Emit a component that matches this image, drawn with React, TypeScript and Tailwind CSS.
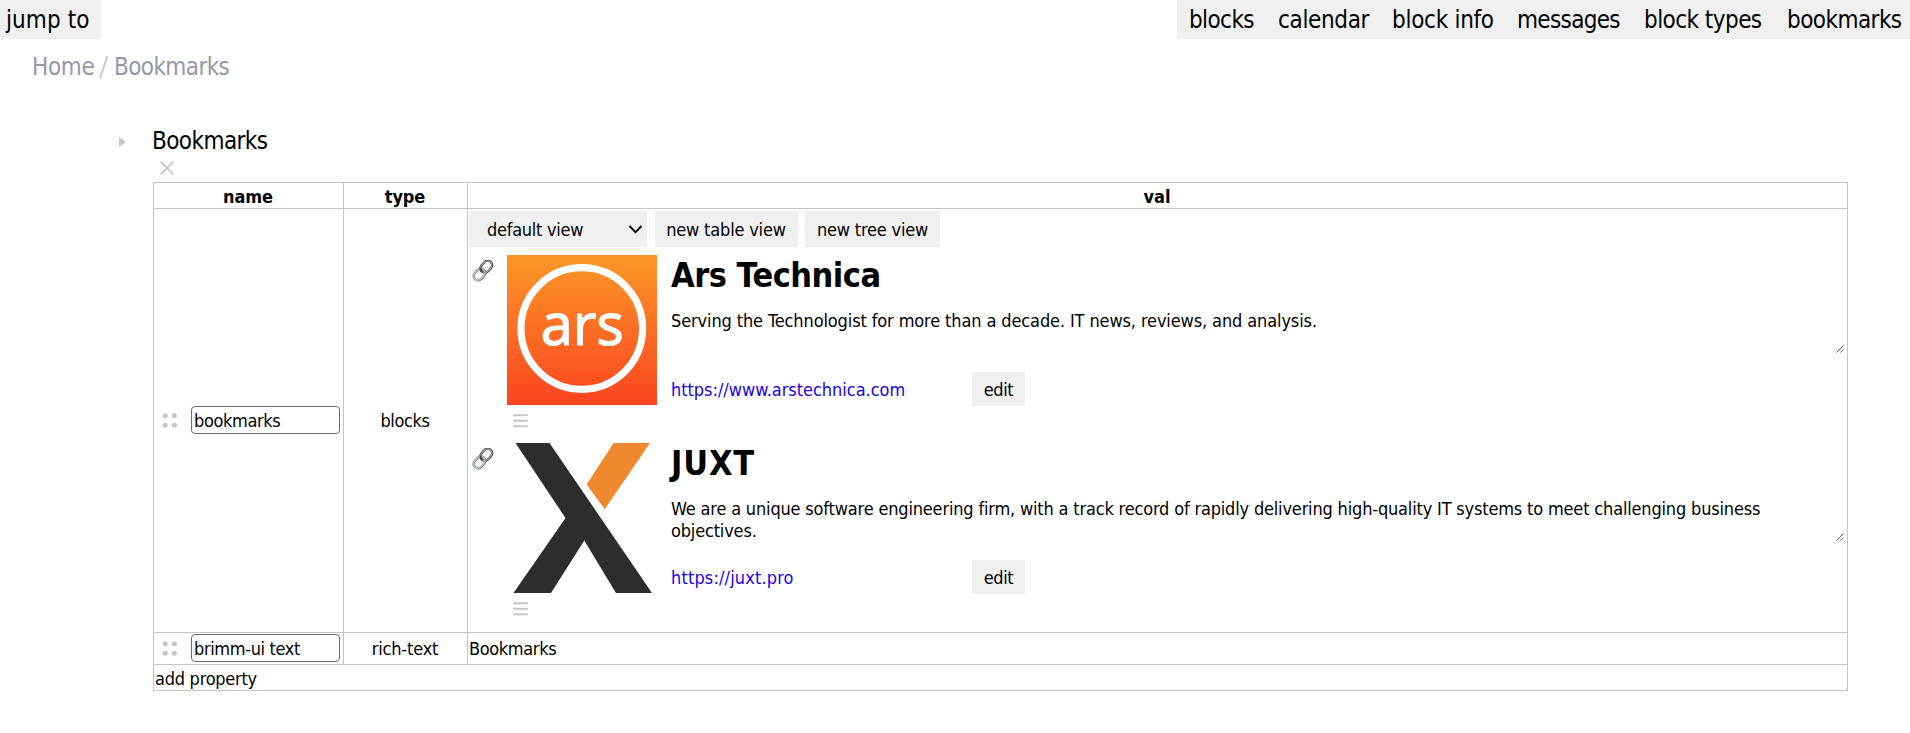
import React from "react";

const NAV = [
  { label: "blocks", width: "w-[65px] tracking-[-0.025em]" },
  { label: "calendar", width: "w-[90px]" },
  { label: "block info", width: "w-[101px] tracking-[-0.012em]" },
  { label: "messages", width: "w-[103px] tracking-[-0.028em]" },
  { label: "block types", width: "w-[119px] tracking-[-0.023em]" },
  { label: "bookmarks", width: "w-[117px] tracking-[-0.023em]" },
];

function LinkIcon() {
  return (
    <svg className="mt-[5px] ml-[3px] h-[22px] w-[22px] shrink-0" viewBox="0 0 22 22" fill="none">
      <g transform="rotate(-48 10.8 10.5)">
        <rect x="9.4" y="6.2" width="13" height="8.8" rx="4.4" stroke="#4a454b" strokeWidth="2.4" />
        <rect x="9.5" y="6.3" width="12.6" height="8.5" rx="4.25" stroke="#b3b5c2" strokeWidth="1" />
        <rect x="-0.8" y="6.2" width="13" height="8.8" rx="4.4" stroke="#6b7480" strokeWidth="2.4" />
        <rect x="-0.7" y="6.1" width="12.7" height="8.6" rx="4.3" stroke="#ccd6e2" strokeWidth="1.2" />
        <path d="M9.4 11a4.4 4.4 0 0 1 2 -4" stroke="#4a454b" strokeWidth="2.2" />
      </g>
    </svg>
  );
}

function ArsLogo() {
  return (
    <svg className="block h-[150px] w-[150px]" viewBox="0 0 150 150">
      <defs>
        <linearGradient id="ars-bg" x1="0" y1="0" x2="0" y2="1">
          <stop offset="0" stopColor="#fc9828" />
          <stop offset="1" stopColor="#fc4420" />
        </linearGradient>
      </defs>
      <rect width="150" height="150" fill="url(#ars-bg)" />
      <circle cx="74.8" cy="73.5" r="60.8" fill="none" stroke="#fff" strokeWidth="7.2" />
      <text
        x="75"
        y="89.5"
        textAnchor="middle"
        textLength="83"
        lengthAdjust="spacingAndGlyphs"
        fontSize="58"
        fontFamily="'Noto Sans', sans-serif"
        fill="#fff"
        stroke="#fff"
        strokeWidth="0.9"
      >
        ars
      </text>
    </svg>
  );
}

function JuxtLogo() {
  return (
    <svg className="block h-[150px] w-[150px]" viewBox="0 0 150 150">
      <path d="M8.5 0H42.5L145 150H109L77.3 97.5L44 150H6.5L58.5 75Z" fill="#2d2d2d" />
      <path d="M106.5 0H143L97.7 66.3L79.7 41.5Z" fill="#f0882d" />
    </svg>
  );
}

function Hamburger() {
  return (
    <svg className="mt-[9px] ml-[6px] block h-[14px] w-[15px]" viewBox="0 0 15 14">
      <path d="M1 1.2H14M1 6.7H14M1 12.3H14" stroke="#c6c6c6" strokeWidth="2" strokeLinecap="round" />
    </svg>
  );
}

function Resizer() {
  return (
    <svg className="h-[8px] w-[8px]" viewBox="0 0 8 8" fill="none">
      <path d="M0.5 7.5L7.5 0.5M4.5 7.5L7.5 4.5" stroke="#555" strokeWidth="0.9" />
    </svg>
  );
}

function Grip() {
  return (
    <svg className="h-[15px] w-[15px] shrink-0" viewBox="0 0 15 15" fill="#c6c6c6">
      <circle cx="3.2" cy="2.7" r="2.5" />
      <circle cx="12.4" cy="2.7" r="2.5" />
      <circle cx="3.2" cy="12.3" r="2.5" />
      <circle cx="12.4" cy="12.3" r="2.5" />
    </svg>
  );
}

function NameCell({ value }: { value: string }) {
  return (
    <div className="flex items-center pb-px pl-[8px]">
      <Grip />
      <div className="ml-[14px] flex h-[28px] w-[149px] items-center rounded-[4px] border border-[#6b6b6b] pt-[2px] pl-[2px]">
        {value}
      </div>
    </div>
  );
}

type BookmarkProps = {
  logo: React.ReactNode;
  title: React.ReactNode;
  text: React.ReactNode;
  url: React.ReactNode;
};

function Bookmark({ logo, title, text, url }: BookmarkProps) {
  return (
    <div className="flex h-[188px] items-start">
      <LinkIcon />
      <div className="ml-[13px] w-[150px] shrink-0">
        {logo}
        <Hamburger />
      </div>
      <div className="ml-[14px] flex h-[151px] min-w-0 flex-1 flex-col">
        <h2 className="h-[52px] text-[34px] leading-[41px] font-bold whitespace-nowrap">{title}</h2>
        <div className="flex h-[65px] items-start justify-between">
          <p className="pt-[3px] leading-[22px]">{text}</p>
          <div className="pt-[38px] pr-[3px]">
            <Resizer />
          </div>
        </div>
        <div className="flex h-[34px] items-center">
          <a className="w-[301px] pt-[2px] tracking-[-0.002em] text-[#2200ee]">{url}</a>
          <button className="h-[34px] w-[53px] bg-[#f0f0f0] pt-[2px]">edit</button>
        </div>
      </div>
    </div>
  );
}

export default function App() {
  return (
    <div className="h-[733px] w-[1910px] overflow-hidden bg-white font-['DejaVu_Sans_Condensed','DejaVu_Sans',sans-serif] text-[18px] leading-[22px] tracking-[-0.02em] text-black [font-stretch:condensed]">
      <header className="flex h-[39px] justify-between text-[24px] leading-[41px]">
        <button className="w-[101px] bg-[#f0f0f0] pl-[6px] text-left tracking-[0.003em] whitespace-nowrap">jump to</button>
        <nav className="flex gap-[24px] bg-[#f0f0f0] pr-[6px] pl-[12px] whitespace-nowrap">
          {NAV.map((n) => (
            <a key={n.label} className={n.width}>
              {n.label}
            </a>
          ))}
        </nav>
      </header>

      <div className="flex h-[55px] pt-[14px] pl-[32px] text-[24px] leading-[28px] whitespace-nowrap text-[#9399a8]">
        <span className="w-[66px]">Home</span>
        <svg className="mt-[3px] mr-[5px] h-[23px] w-[11px]" viewBox="0 0 11 23">
          <path d="M2 22.5L9.2 0.5" stroke="#c8c8c8" strokeWidth="2" />
        </svg>
        <span className="tracking-[-0.025em]">Bookmarks</span>
      </div>

      <div className="flex h-[67px] items-start pt-[33px] pl-[119px]">
        <svg className="mt-[10px] h-[10px] w-[7px]" viewBox="0 0 7 10">
          <path d="M0 0L7 5L0 10Z" fill="#c6c6c6" />
        </svg>
        <h1 className="ml-[26px] text-[24px] leading-[28px] tracking-[-0.024em]">Bookmarks</h1>
      </div>

      <div className="h-[21px] pl-[160px]">
        <svg className="h-[14px] w-[14px]" viewBox="0 0 14 14">
          <path d="M1.2 1.2L12.8 12.8M12.8 1.2L1.2 12.8" stroke="#c6c6c6" strokeWidth="1.9" strokeLinecap="round" />
        </svg>
      </div>

      <table className="ml-[153px] w-[1695px] table-fixed border-collapse [&_td]:border [&_td]:border-[#c4c4c4] [&_td]:p-0 [&_th]:border [&_th]:border-[#c4c4c4] [&_th]:p-0">
        <colgroup>
          <col className="w-[190px]" />
          <col className="w-[124px]" />
          <col />
        </colgroup>
        <thead>
          <tr className="h-[26px] tracking-[-0.005em]">
            <th>
              <div className="pt-[2px] pr-px">name</div>
            </th>
            <th>
              <div className="pt-[2px] pr-px">type</div>
            </th>
            <th>
              <div className="pt-[2px] pr-px">val</div>
            </th>
          </tr>
        </thead>
        <tbody>
          <tr className="h-[424px]">
            <td>
              <NameCell value="bookmarks" />
            </td>
            <td className="text-center">
              <div className="pr-px">blocks</div>
            </td>
            <td className="align-top">
              <div className="flex pt-[2px] pl-px tracking-[-0.01em]">
                <div className="flex h-[36px] w-[178px] items-center justify-between bg-[#f0f0f0] pr-[4px] pl-[18px]">
                  <span className="pt-[2px] tracking-[-0.015em]">default view</span>
                  <svg className="h-[9px] w-[15px]" viewBox="0 0 15 9" fill="none">
                    <path d="M1.5 1L7.5 7.2L13.5 1" stroke="#000" strokeWidth="1.8" />
                  </svg>
                </div>
                <button className="ml-[8px] h-[36px] w-[143px] bg-[#f0f0f0] pt-[2px] pr-px">new table view</button>
                <button className="ml-[7px] h-[36px] w-[135px] bg-[#f0f0f0] pt-[2px]">new tree view</button>
              </div>
              <div className="pt-[8px] pl-px">
                <Bookmark
                  logo={<ArsLogo />}
                  title={<span className="tracking-[-0.015em]">Ars Technica</span>}
                  text={
                    <span className="tracking-[-0.0065em]">
                      Serving the Technologist for more than a decade. IT news, reviews, and analysis.
                    </span>
                  }
                  url="https://www.arstechnica.com"
                />
                <Bookmark
                  logo={<JuxtLogo />}
                  title={<span className="tracking-[0.025em]">JUXT</span>}
                  text={
                    <span className="tracking-[-0.0096em]">
                      We are a unique software engineering firm, with a track record of rapidly delivering high-quality IT
                      systems to meet challenging business
                      <br />
                      objectives.
                    </span>
                  }
                  url={<span className="tracking-[0.008em]">https://juxt.pro</span>}
                />
              </div>
            </td>
          </tr>
          <tr className="h-[32px]">
            <td>
              <NameCell value="brimm-ui text" />
            </td>
            <td className="text-center">
              <div className="pr-px tracking-[-0.01em]">rich-text</div>
            </td>
            <td>
              <div className="pl-px">Bookmarks</div>
            </td>
          </tr>
          <tr className="h-[26px]">
            <td colSpan={3}>
              <div className="pt-[2px] pl-px tracking-[-0.014em]">add property</div>
            </td>
          </tr>
        </tbody>
      </table>
    </div>
  );
}
